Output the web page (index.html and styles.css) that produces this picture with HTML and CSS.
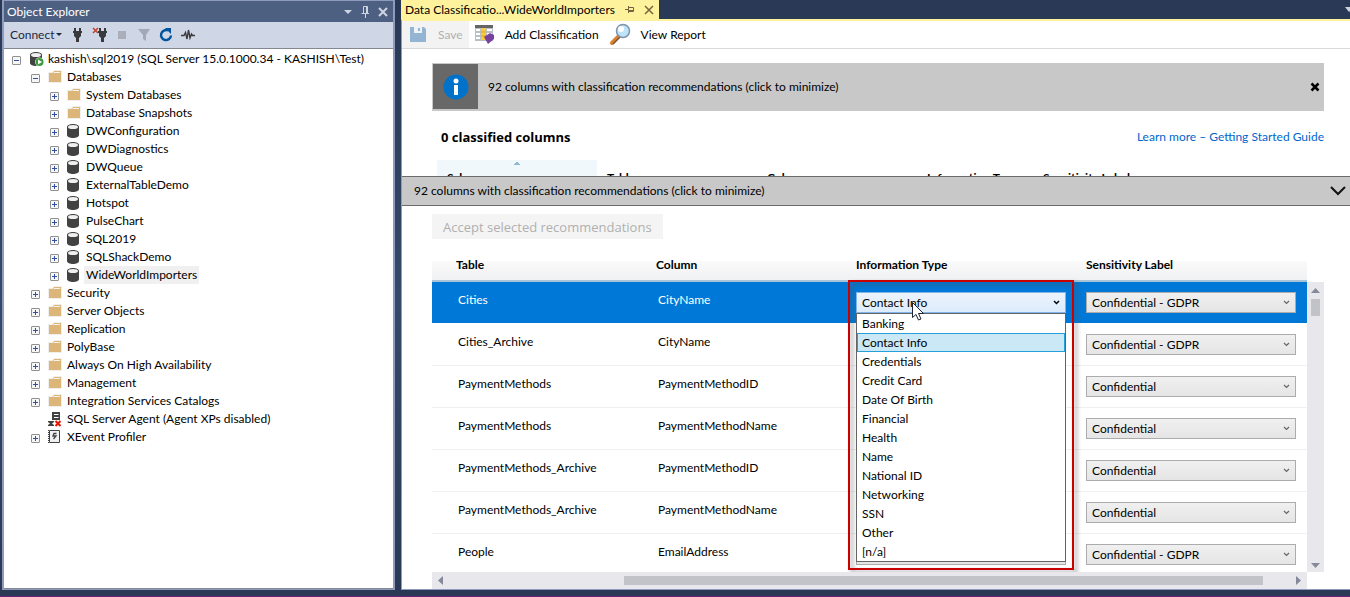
FILE: index.html
```
<!DOCTYPE html>
<html lang="en">
<head>
  <meta charset="UTF-8">
  <title>Data Classification - WideWorldImporters</title>
  <link rel="stylesheet" href="styles.css">
</head>
<body>
  <!-- shared icons -->
  <svg class="defs" width="0" height="0">
    <symbol id="folder" viewBox="0 0 16 16">
      <path d="M0.5 3.5H4.5L6 1.5H13.5V13.5H0.5Z" fill="#dcb679" stroke="#f0efee"/>
      <path d="M5.5 3.5H12" stroke="#f7f1e6" fill="none"/>
    </symbol>
    <symbol id="db" viewBox="0 0 16 16">
      <path d="M0 4C0 0 12 0 12 4V12C12 16 0 16 0 12Z" fill="#424242"/>
      <ellipse cx="6" cy="4" rx="5" ry="2" fill="#f0eff1"/>
    </symbol>
  </svg>

  <div class="workspace">
    <aside class="explorer">
      <header class="panel-title">
        <span>Object Explorer</span>
        <button aria-label="Window position"><svg width="9" height="14"><path d="M0 5H8L4 9Z" fill="#ced4e0"/></svg></button>
        <button aria-label="Auto hide"><svg width="9" height="14"><path d="M2.5 8V1.5H6.5V8M5.5 2V8M0.5 8.5H8M4.5 9V13" fill="none" stroke="#ced4e0"/></svg></button>
        <button aria-label="Close"><svg width="10" height="14"><path d="M1 3L9 11M9 3L1 11" stroke="#ced4e0" stroke-width="2"/></svg></button>
      </header>

      <div class="panel-tools">
        <button class="connect">Connect<svg width="6" height="4"><path d="M0 0H6L3 3Z" fill="#1b293e"/></svg></button>
        <button aria-label="Connect server"><svg width="16" height="16"><path d="M5 1V5M10 1V5" stroke="#3a3a3c" stroke-width="2"/><path d="M3 4H12V6H11V9L9 11V15H6V11L4 9V6H3Z" fill="#3a3a3c"/></svg></button>
        <button aria-label="Disconnect"><svg width="16" height="16"><path d="M1 1L6 6M6 1L1 6" stroke="#c2402c" stroke-width="1.5"/><path d="M8 1V5M13 1V5" stroke="#3a3a3c" stroke-width="2"/><path d="M6 4H15V6H14V9L12 11V15H9V11L7 9V6H6Z" fill="#3a3a3c"/></svg></button>
        <button aria-label="Stop"><svg width="16" height="16"><path d="M4 4H12V12H4Z" fill="#a9aeba"/></svg></button>
        <button aria-label="Filter"><svg width="16" height="16"><path d="M2 2H14L10 8V14L7 12V8Z" fill="#a2a8b5"/></svg></button>
        <button aria-label="Refresh"><svg width="16" height="16"><path d="M10 3.5A5 5 0 1 0 13 8.5" fill="none" stroke="#00539c" stroke-width="2.4"/><path d="M7 1H13V7Z" fill="#00539c"/></svg></button>
        <button aria-label="Activity Monitor"><svg width="16" height="16"><path d="M1 8.5H4L5.5 5.5L7 12L8.5 3L10 11L11.5 7L12.5 8.5H15" fill="none" stroke="#3a3a3c" stroke-width="1.4"/></svg></button>
      </div>

      <ul class="tree">
        <li>
          <div class="node"><button class="exp" aria-label="Collapse"></button><svg class="ico"><use href="#db" x="1"/><circle cx="10.500" cy="11" r="4.500" fill="#fff"/><circle cx="10.500" cy="11" r="4" fill="#389b3d"/><path d="M9 8.500V13.500L13 11Z" fill="#fff"/></svg><span>kashish\sql2019 (SQL Server 15.0.1000.34 - KASHISH\Test)</span></div>
          <ul>
            <li>
              <div class="node"><button class="exp" aria-label="Collapse"></button><svg class="ico"><use href="#folder"/></svg><span>Databases</span></div>
              <ul>
                <li class="node"><button class="exp plus" aria-label="Expand"></button><svg class="ico"><use href="#folder"/></svg><span>System Databases</span></li>
                <li class="node"><button class="exp plus" aria-label="Expand"></button><svg class="ico"><use href="#folder"/></svg><span>Database Snapshots</span></li>
                <li class="node"><button class="exp plus" aria-label="Expand"></button><svg class="ico"><use href="#db"/></svg><span>DWConfiguration</span></li>
                <li class="node"><button class="exp plus" aria-label="Expand"></button><svg class="ico"><use href="#db"/></svg><span>DWDiagnostics</span></li>
                <li class="node"><button class="exp plus" aria-label="Expand"></button><svg class="ico"><use href="#db"/></svg><span>DWQueue</span></li>
                <li class="node"><button class="exp plus" aria-label="Expand"></button><svg class="ico"><use href="#db"/></svg><span>ExternalTableDemo</span></li>
                <li class="node"><button class="exp plus" aria-label="Expand"></button><svg class="ico"><use href="#db"/></svg><span>Hotspot</span></li>
                <li class="node"><button class="exp plus" aria-label="Expand"></button><svg class="ico"><use href="#db"/></svg><span>PulseChart</span></li>
                <li class="node"><button class="exp plus" aria-label="Expand"></button><svg class="ico"><use href="#db"/></svg><span>SQL2019</span></li>
                <li class="node"><button class="exp plus" aria-label="Expand"></button><svg class="ico"><use href="#db"/></svg><span>SQLShackDemo</span></li>
                <li class="node selected"><button class="exp plus" aria-label="Expand"></button><svg class="ico"><use href="#db"/></svg><span>WideWorldImporters</span></li>
              </ul>
            </li>
            <li class="node"><button class="exp plus" aria-label="Expand"></button><svg class="ico"><use href="#folder"/></svg><span>Security</span></li>
            <li class="node"><button class="exp plus" aria-label="Expand"></button><svg class="ico"><use href="#folder"/></svg><span>Server Objects</span></li>
            <li class="node"><button class="exp plus" aria-label="Expand"></button><svg class="ico"><use href="#folder"/></svg><span>Replication</span></li>
            <li class="node"><button class="exp plus" aria-label="Expand"></button><svg class="ico"><use href="#folder"/></svg><span>PolyBase</span></li>
            <li class="node"><button class="exp plus" aria-label="Expand"></button><svg class="ico"><use href="#folder"/></svg><span>Always On High Availability</span></li>
            <li class="node"><button class="exp plus" aria-label="Expand"></button><svg class="ico"><use href="#folder"/></svg><span>Management</span></li>
            <li class="node"><button class="exp plus" aria-label="Expand"></button><svg class="ico"><use href="#folder"/></svg><span>Integration Services Catalogs</span></li>
            <li class="node"><i class="exp-space"></i><svg class="ico"><path d="M4 1H12V9H4Z" fill="#424242"/><path d="M6 3.500H10.500M6 6.500H10.500" stroke="#fff"/><path d="M0 10H6V11L4 12.500L6 14V15H0V14L2 12.500L0 11Z" fill="#424242"/><path d="M7.500 10L12.500 15M12.500 10L7.500 15" stroke="#e51400" stroke-width="2"/></svg><span>SQL Server Agent (Agent XPs disabled)</span></li>
            <li class="node"><button class="exp plus" aria-label="Expand"></button><svg class="ico"><path d="M1.500 1.500H11.500V13.500H1.500Z" fill="#f0eff1" stroke="#424242"/><path d="M0.500 1V14" stroke="#424242" stroke-dasharray="1 1"/><path d="M8.500 4.500H6L5 7H8L5.500 10" fill="none" stroke="#424242" stroke-width="1.300"/></svg><span>XEvent Profiler</span></li>
          </ul>
        </li>
      </ul>
    </aside>

    <main class="document">
      <div class="tabs">
        <div class="tab">
          <span>Data Classificatio...WideWorldImporters</span>
          <button aria-label="Pin"><svg width="9" height="9"><path d="M0 4.5H3M3.500 1V8M4 2.500H8.500V6.500H4M4 5.500H8" fill="none" stroke="#75633d"/></svg></button>
          <button aria-label="Close tab"><svg width="10" height="10"><path d="M1 1L9 9M9 1L1 9" stroke="#75633d" stroke-width="1.500"/></svg></button>
        </div>
        <button class="tab-menu" aria-label="Active files"><svg width="5" height="5"><path d="M0 0H9L4 5Z" fill="#ced4dd"/></svg></button>
      </div>

      <div class="doc">
        <div class="toolbar">
          <button class="save" disabled>
            <svg width="24" height="24"><path d="M4 4H18L20 6V19H4Z" fill="#93b4d3"/><path d="M8 4H16V10H8Z" fill="#f0f3f6"/><path d="M12 5H14V8H12Z" fill="#93b4d3"/></svg>
            Save
          </button>
          <button>
            <svg width="24" height="24"><path d="M2 2H20V18H2Z" fill="#b6bfc3"/><path d="M2 2H20V5H2Z" fill="#656565"/><path d="M3 6H7V8H3ZM3 10H7V12H3ZM3 14H7V16H3ZM14 6H19V8H14ZM14 10H19V12H14Z" fill="#fff"/><path d="M8 5H13V17H8Z" fill="#fcca3c"/><path d="M8 9H13M8 13H13" stroke="#e6a30c"/><path d="M11 14L17 10L21 12V16L15 21Z" fill="#76429c"/></svg>
            Add Classification
          </button>
          <button>
            <svg width="24" height="24"><path d="M3 20L10 13" stroke="#d9822e" stroke-width="4" stroke-linecap="round"/><path d="M4 21L11 14" stroke="#77563e" stroke-width="1.500"/><circle cx="14" cy="8" r="6.500" fill="#bfe4fa" stroke="#8195aa" stroke-width="1.500"/><circle cx="12" cy="6" r="3" fill="#fff"/></svg>
            View Report
          </button>
        </div>

        <section class="classified">
          <div class="banner">
            <div class="info">
              <svg width="26" height="26"><circle cx="13" cy="13" r="12.500" fill="#0072c9"/><circle cx="13" cy="7" r="2.500" fill="#fff"/><path d="M11 11H15V21H11Z" fill="#fff"/></svg>
            </div>
            <span>92 columns with classification recommendations (click to minimize)</span>
            <button aria-label="Dismiss"><svg width="10" height="10"><path d="M1.500 1.500L8.500 8.500M8.500 1.500L1.500 8.500" stroke="#000" stroke-width="2.500"/></svg></button>
          </div>
          <div class="summary">
            <h2>0 classified columns</h2>
            <a href="#">Learn more – Getting Started Guide</a>
          </div>
          <div class="classified-head">
            <span class="sorted">Schema</span><span>Table</span><span>Column</span><span class="narrow">Information Type</span><span>Sensitivity Label</span>
          </div>
        </section>

        <button class="splitter">
          92 columns with classification recommendations (click to minimize)
          <svg width="16" height="10"><path d="M1 1L8 8L15 1" fill="none" stroke="#111" stroke-width="2"/></svg>
        </button>

        <section class="recommend">
          <button class="accept" disabled>Accept selected recommendations</button>

          <div class="grid">
            <div class="rows">
              <table>
                <colgroup><col class="c-table"><col class="c-column"><col class="c-type"><col></colgroup>
                <thead>
                  <tr><th>Table</th><th>Column</th><th>Information Type</th><th>Sensitivity Label</th></tr>
                </thead>
                <tbody>
                  <tr class="current">
                    <td>Cities</td><td>CityName</td>
                    <td>
                      <div class="combo">
                        <select class="open" aria-label="Information type"><option>Contact Info</option></select>
                        <div class="callout"></div>
                        <ul class="options" role="listbox">
                          <li>Banking</li>
                          <li class="hot">Contact Info</li>
                          <li>Credentials</li>
                          <li>Credit Card</li>
                          <li>Date Of Birth</li>
                          <li>Financial</li>
                          <li>Health</li>
                          <li>Name</li>
                          <li>National ID</li>
                          <li>Networking</li>
                          <li>SSN</li>
                          <li>Other</li>
                          <li>[n/a]</li>
                        </ul>
                        <svg class="pointer" width="13" height="20"><path d="M0.500 0.500V15.500L4 12.500L6.500 18L9 17L6.500 11.500H11.500Z" fill="#fff" stroke="#223"/></svg>
                      </div>
                    </td>
                    <td><select aria-label="Sensitivity label"><option>Confidential - GDPR</option></select></td>
                  </tr>
                  <tr><td>Cities_Archive</td><td>CityName</td><td><select aria-label="Information type"><option>Contact Info</option></select></td><td><select aria-label="Sensitivity label"><option>Confidential - GDPR</option></select></td></tr>
                  <tr><td>PaymentMethods</td><td>PaymentMethodID</td><td><select aria-label="Information type"><option>Financial</option></select></td><td><select aria-label="Sensitivity label"><option>Confidential</option></select></td></tr>
                  <tr><td>PaymentMethods</td><td>PaymentMethodName</td><td><select aria-label="Information type"><option>Financial</option></select></td><td><select aria-label="Sensitivity label"><option>Confidential</option></select></td></tr>
                  <tr><td>PaymentMethods_Archive</td><td>PaymentMethodID</td><td><select aria-label="Information type"><option>Financial</option></select></td><td><select aria-label="Sensitivity label"><option>Confidential</option></select></td></tr>
                  <tr><td>PaymentMethods_Archive</td><td>PaymentMethodName</td><td><select aria-label="Information type"><option>Financial</option></select></td><td><select aria-label="Sensitivity label"><option>Confidential</option></select></td></tr>
                  <tr><td>People</td><td>EmailAddress</td><td><select aria-label="Information type"><option>Contact Info</option></select></td><td><select aria-label="Sensitivity label"><option>Confidential - GDPR</option></select></td></tr>
                </tbody>
              </table>
            </div>
            <div class="vbar">
              <svg width="9" height="5"><path d="M0 5H9L4.500 0Z" fill="#868999"/></svg>
              <i class="thumb"></i>
              <svg width="9" height="5"><path d="M0 0H9L4.500 5Z" fill="#868999"/></svg>
            </div>
            <div class="hbar">
              <svg width="5" height="9"><path d="M5 0V9L0 4.500Z" fill="#868999"/></svg>
              <i class="thumb"></i>
              <svg width="5" height="9"><path d="M0 0V9L5 4.500Z" fill="#868999"/></svg>
            </div>
          </div>
        </section>
      </div>
    </main>
  </div>
</body>
</html>
```

FILE: styles.css
```
* {
  box-sizing: border-box;
}

body {
  margin: 0;
  height: 100vh;
  display: flex;
  flex-direction: column;
  background: linear-gradient(#293955, #35496a 50%, #293955);
  border-bottom: 1px solid #68217a;
  font: 12px/18px Lato, "Open Sans", sans-serif;
  color: #000;
  overflow: hidden;
}

button {
  font: inherit;
  color: inherit;
  background: none;
  border: 0;
  padding: 0;
  display: flex;
  align-items: center;
}

ul {
  list-style: none;
  margin: 0;
  padding: 0;
}

.defs {
  position: absolute;
}

.workspace {
  flex: 1;
  min-height: 0;
  display: flex;
  gap: 6px;
  padding: 0 0 6px 2px;
}

/* object explorer */
.explorer {
  flex: 0 0 393px;
  display: flex;
  flex-direction: column;
  border: 1px solid #8e9bbc;
  border-right-width: 2px;
  border-left-width: 2px;
}

.panel-title {
  display: flex;
  align-items: center;
  gap: 8px;
  height: 21px;
  padding: 0 5px 0 3px;
  background: #4d6082;
  color: #fff;
}

.panel-title span {
  flex: 1;
}

.panel-tools {
  display: flex;
  align-items: center;
  gap: 6px;
  height: 27px;
  padding-left: 6px;
  background: #cfd6e5;
  border-bottom: 1px solid #828790;
}

.connect {
  gap: 2px;
  margin-right: 2px;
  color: #1b293e;
}

.tree {
  flex: 1;
  background: #fff;
  padding: 1px 0 0 8px;
  border-bottom: 1px solid #828790;
}

.tree ul {
  padding-left: 19px;
}

.node {
  display: flex;
  align-items: center;
  height: 18px;
  white-space: nowrap;
}

.node span {
  padding: 0 2px;
}

.selected span {
  background: #f0f0f0;
}

.exp {
  flex: none;
  width: 9px;
  height: 9px;
  margin: 3px 8px 0 0;
  border: 1px solid #919191;
  border-radius: 1px;
  background: linear-gradient(#3350a0, #3350a0) center / 5px 1px no-repeat, #f6f6f6;
}

.plus {
  background: linear-gradient(#3350a0, #3350a0) center / 5px 1px no-repeat,
    linear-gradient(#3350a0, #3350a0) center / 1px 5px no-repeat, #f6f6f6;
}

.exp-space {
  width: 17px;
}

.ico {
  flex: none;
  width: 16px;
  height: 16px;
  margin-right: 1px;
}

.ico use {
  width: 16px;
  height: 16px;
}

/* document area */
.document {
  flex: 1;
  min-width: 0;
  display: flex;
  flex-direction: column;
}

.tabs {
  display: flex;
  justify-content: space-between;
  align-items: center;
  height: 19px;
}

.tab {
  display: flex;
  align-items: center;
  gap: 10px;
  height: 100%;
  padding: 0 5px 0 4px;
  background: #fff29d;
}

.doc {
  flex: 1;
  min-height: 0;
  display: flex;
  flex-direction: column;
  background: #fff;
  border: 1px solid #8e9bbc;
  border-top: 2px solid #fff29d;
  border-right: 0;
}

.toolbar {
  display: flex;
  height: 28px;
  border-bottom: 1px solid #d9d9d9;
}

.toolbar button {
  gap: 8px;
  padding: 0 6px 0 4px;
}

.toolbar .save {
  color: #b0b0b0;
  background: #f3f3f3;
}

.classified {
  flex: none;
  height: 127px;
  padding: 14px 26px 0 30px;
  overflow: hidden;
}

.banner {
  display: flex;
  align-items: center;
  height: 48px;
  padding: 1px 4px 2px 1px;
  background: #c8c8c8;
}

.banner span {
  flex: 1;
  padding-left: 10px;
}

.info {
  width: 45px;
  height: 45px;
  display: flex;
  align-items: center;
  justify-content: center;
  background: #686868;
}

.summary {
  display: flex;
  justify-content: space-between;
  align-items: center;
  height: 49px;
  padding: 2px 0 0 9px;
}

.summary h2 {
  margin: 0;
  font-family: "Open Sans", sans-serif;
  font-size: 13px;
}

.summary a {
  color: #0066cc;
  text-decoration: none;
}

.classified-head {
  display: flex;
  padding-left: 5px;
  font-weight: bold;
}

.classified-head span {
  width: 160px;
  height: 30px;
  padding: 9px 0 0 10px;
  white-space: nowrap;
}

.classified-head .narrow {
  width: 116px;
}

.classified-head .sorted {
  background: conic-gradient(from 135deg at 50% 0, #8db9cd 90deg, transparent 0) center 1px / 8px 4px no-repeat, #f0f8fc;
}

.splitter {
  flex: none;
  justify-content: space-between;
  height: 30px;
  padding: 0 4px 0 12px;
  background: #c8c8c8;
  border: solid #6b6b6b;
  border-width: 1px 0;
}

.recommend {
  flex: 1;
  min-height: 0;
  display: flex;
  flex-direction: column;
  align-items: flex-start;
  padding: 8px 26px 0 30px;
}

.accept {
  flex: none;
  height: 25px;
  padding: 0 11px;
  font-family: "Open Sans", sans-serif;
  font-size: 13px;
  color: #b0b0b0;
  background: #f4f4f4;
}

.grid {
  flex: 1;
  min-height: 0;
  align-self: stretch;
  display: grid;
  grid-template: 1fr 17px / 1fr 17px;
  margin-top: 16px;
}

.rows {
  overflow: hidden;
}

table {
  width: 100%;
  table-layout: fixed;
  border-collapse: separate;
  border-spacing: 0;
}

.c-table {
  width: 224px;
}

.c-column {
  width: 200px;
}

.c-type {
  width: 230px;
}

th {
  height: 27px;
  padding: 0 0 5px;
  line-height: 20px;
  text-align: left;
  background: linear-gradient(#fff 6px, #fafafa 6px, #f0f1f3);
  border-bottom: 2px solid #a9c4d6;
}

th:first-child {
  padding-left: 24px;
}

td {
  height: 42px;
  padding: 9px 2px 0;
  vertical-align: top;
  border-bottom: 1px solid #f0f0f0;
}

td:first-child {
  padding-left: 26px;
}

td:nth-child(n+3) {
  padding: 10px 0 0;
}

.current td {
  background: #0078d7;
  color: #fff;
  border-color: #fff;
}

select {
  display: block;
  appearance: none;
  width: 210px;
  height: 21px;
  padding: 0 5px;
  font: inherit;
  color: #000;
  border: 1px solid #acacac;
  border-radius: 0;
  background: url("data:image/svg+xml,%3Csvg xmlns='http://www.w3.org/2000/svg' width='7' height='5'%3E%3Cpath d='M1 1L3.500 3.500L6 1' fill='none' stroke='%23666' stroke-width='1.200'/%3E%3C/svg%3E") right 5px center no-repeat, linear-gradient(#f0f0f0, #e5e5e5);
}

.combo {
  position: relative;
  width: 210px;
}

select.open {
  position: relative;
  z-index: 2;
  border-color: #7eb4ea;
  background: url("data:image/svg+xml,%3Csvg xmlns='http://www.w3.org/2000/svg' width='7' height='5'%3E%3Cpath d='M1 1L3.500 3.500L6 1' fill='none' stroke='%23000' stroke-width='1.500'/%3E%3C/svg%3E") right 5px center no-repeat, linear-gradient(#ecf4fc, #dcecfc);
}

.options {
  position: absolute;
  z-index: 2;
  top: 100%;
  left: 0;
  right: 0;
  background: #fff;
  border: 1px solid #646464;
  color: #000;
}

.options li {
  height: 19px;
  padding: 0 4px;
  border: 1px solid transparent;
}

.options .hot {
  background: #cbe8f6;
  border-color: #26a0da;
}

/* red highlight drawn round the open list */
.callout {
  position: absolute;
  z-index: 1;
  top: -12px;
  left: -8px;
  right: -8px;
  height: 290px;
  border: 2px solid #c80000;
  filter: drop-shadow(3px 3px 2px rgba(80, 80, 80, 0.6));
}

.pointer {
  position: absolute;
  z-index: 3;
  top: 10px;
  left: 56px;
}

.vbar,
.hbar {
  display: flex;
  align-items: center;
  justify-content: space-between;
  background: #e8e8ec;
}

.vbar {
  flex-direction: column;
  margin-top: 27px;
  padding: 6px 0 4px;
}

.vbar .thumb {
  width: 9px;
  height: 17px;
  margin: 6px 0 auto;
}

.hbar {
  padding: 0 6px;
}

.hbar .thumb {
  width: 74%;
  height: 9px;
  margin: 0 auto 0 21%;
}

.thumb {
  background: #c2c3c9;
}
```
